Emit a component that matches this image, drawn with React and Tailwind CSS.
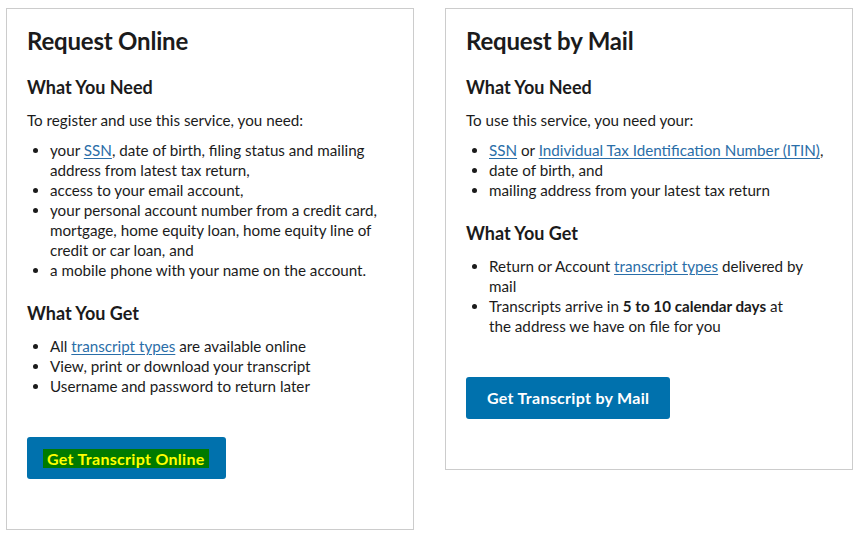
import React from "react";

function A({ children }) {
  return <a href="#" className="text-[#2a6ea8] underline underline-offset-[2px] decoration-1">{children}</a>;
}

export default function App() {
  return (
    <div className="w-[860px] h-[536px] bg-white text-[#1b1b1b] font-['Lato',sans-serif]">
      <div className="flex items-start gap-[31px] pl-[6px] pt-[8px]">
        <div className="w-[408px] border border-[#cccccc] pl-[20px] pr-[21px] pt-[17px] pb-[50px]">
          <h2 className="text-[24px] leading-[30px] font-bold tracking-[-0.2px]">Request Online</h2>
          <h3 className="mt-[18px] text-[18px] leading-[26px] font-bold">What You Need</h3>
          <p className="mt-[10px] text-[15.2px] leading-[20px]">To register and use this service, you need:</p>
          <ul className="mt-[10px] list-disc pl-[23px] text-[15.2px] leading-[20px]">
            <li>your <A>SSN</A>, date of birth, filing status and mailing address from latest tax return,</li>
            <li>access to your email account,</li>
            <li>your personal account number from a credit card, mortgage, home equity loan, home equity line of credit or car loan, and</li>
            <li>a mobile phone with your name on the account.</li>
          </ul>
          <h3 className="mt-[20px] text-[18px] leading-[26px] font-bold">What You Get</h3>
          <ul className="mt-[10px] list-disc pl-[23px] text-[15.2px] leading-[20px]">
            <li>All <A>transcript types</A> are available online</li>
            <li>View, print or download your transcript</li>
            <li>Username and password to return later</li>
          </ul>
          <div className="mt-[41px]">
            <a href="#" className="inline-flex items-center h-[42px] pl-[16px] pr-[17px] rounded-[3px] bg-[#0071ad] text-[16px] font-bold tracking-[0.3px]">
              <span className="bg-[#007a00] text-[#ffff00] px-[4px] leading-[19px]">Get Transcript Online</span>
            </a>
          </div>
        </div>
        <div className="w-[408px] border border-[#cccccc] pl-[20px] pr-[21px] pt-[17px] pb-[50px]">
          <h2 className="text-[24px] leading-[30px] font-bold tracking-[-0.2px]">Request by Mail</h2>
          <h3 className="mt-[18px] text-[18px] leading-[26px] font-bold">What You Need</h3>
          <p className="mt-[10px] text-[15.2px] leading-[20px]">To use this service, you need your:</p>
          <ul className="mt-[10px] list-disc pl-[23px] text-[15.2px] leading-[20px]">
            <li><A>SSN</A> or <A>Individual Tax Identification Number (ITIN)</A>,</li>
            <li>date of birth, and</li>
            <li>mailing address from your latest tax return</li>
          </ul>
          <h3 className="mt-[20px] text-[18px] leading-[26px] font-bold">What You Get</h3>
          <ul className="mt-[10px] list-disc pl-[23px] pr-[24px] text-[15.2px] leading-[20px]">
            <li>Return or Account <A>transcript types</A> delivered by mail</li>
            <li>Transcripts arrive in <b>5 to 10 calendar days</b> at the address we have on file for you</li>
          </ul>
          <div className="mt-[41px]">
            <a href="#" className="inline-flex items-center h-[42px] px-[21px] rounded-[3px] bg-[#0071ad] text-white text-[16px] font-bold tracking-[0.3px]">
              Get Transcript by Mail
            </a>
          </div>
        </div>
      </div>
    </div>
  );
}
